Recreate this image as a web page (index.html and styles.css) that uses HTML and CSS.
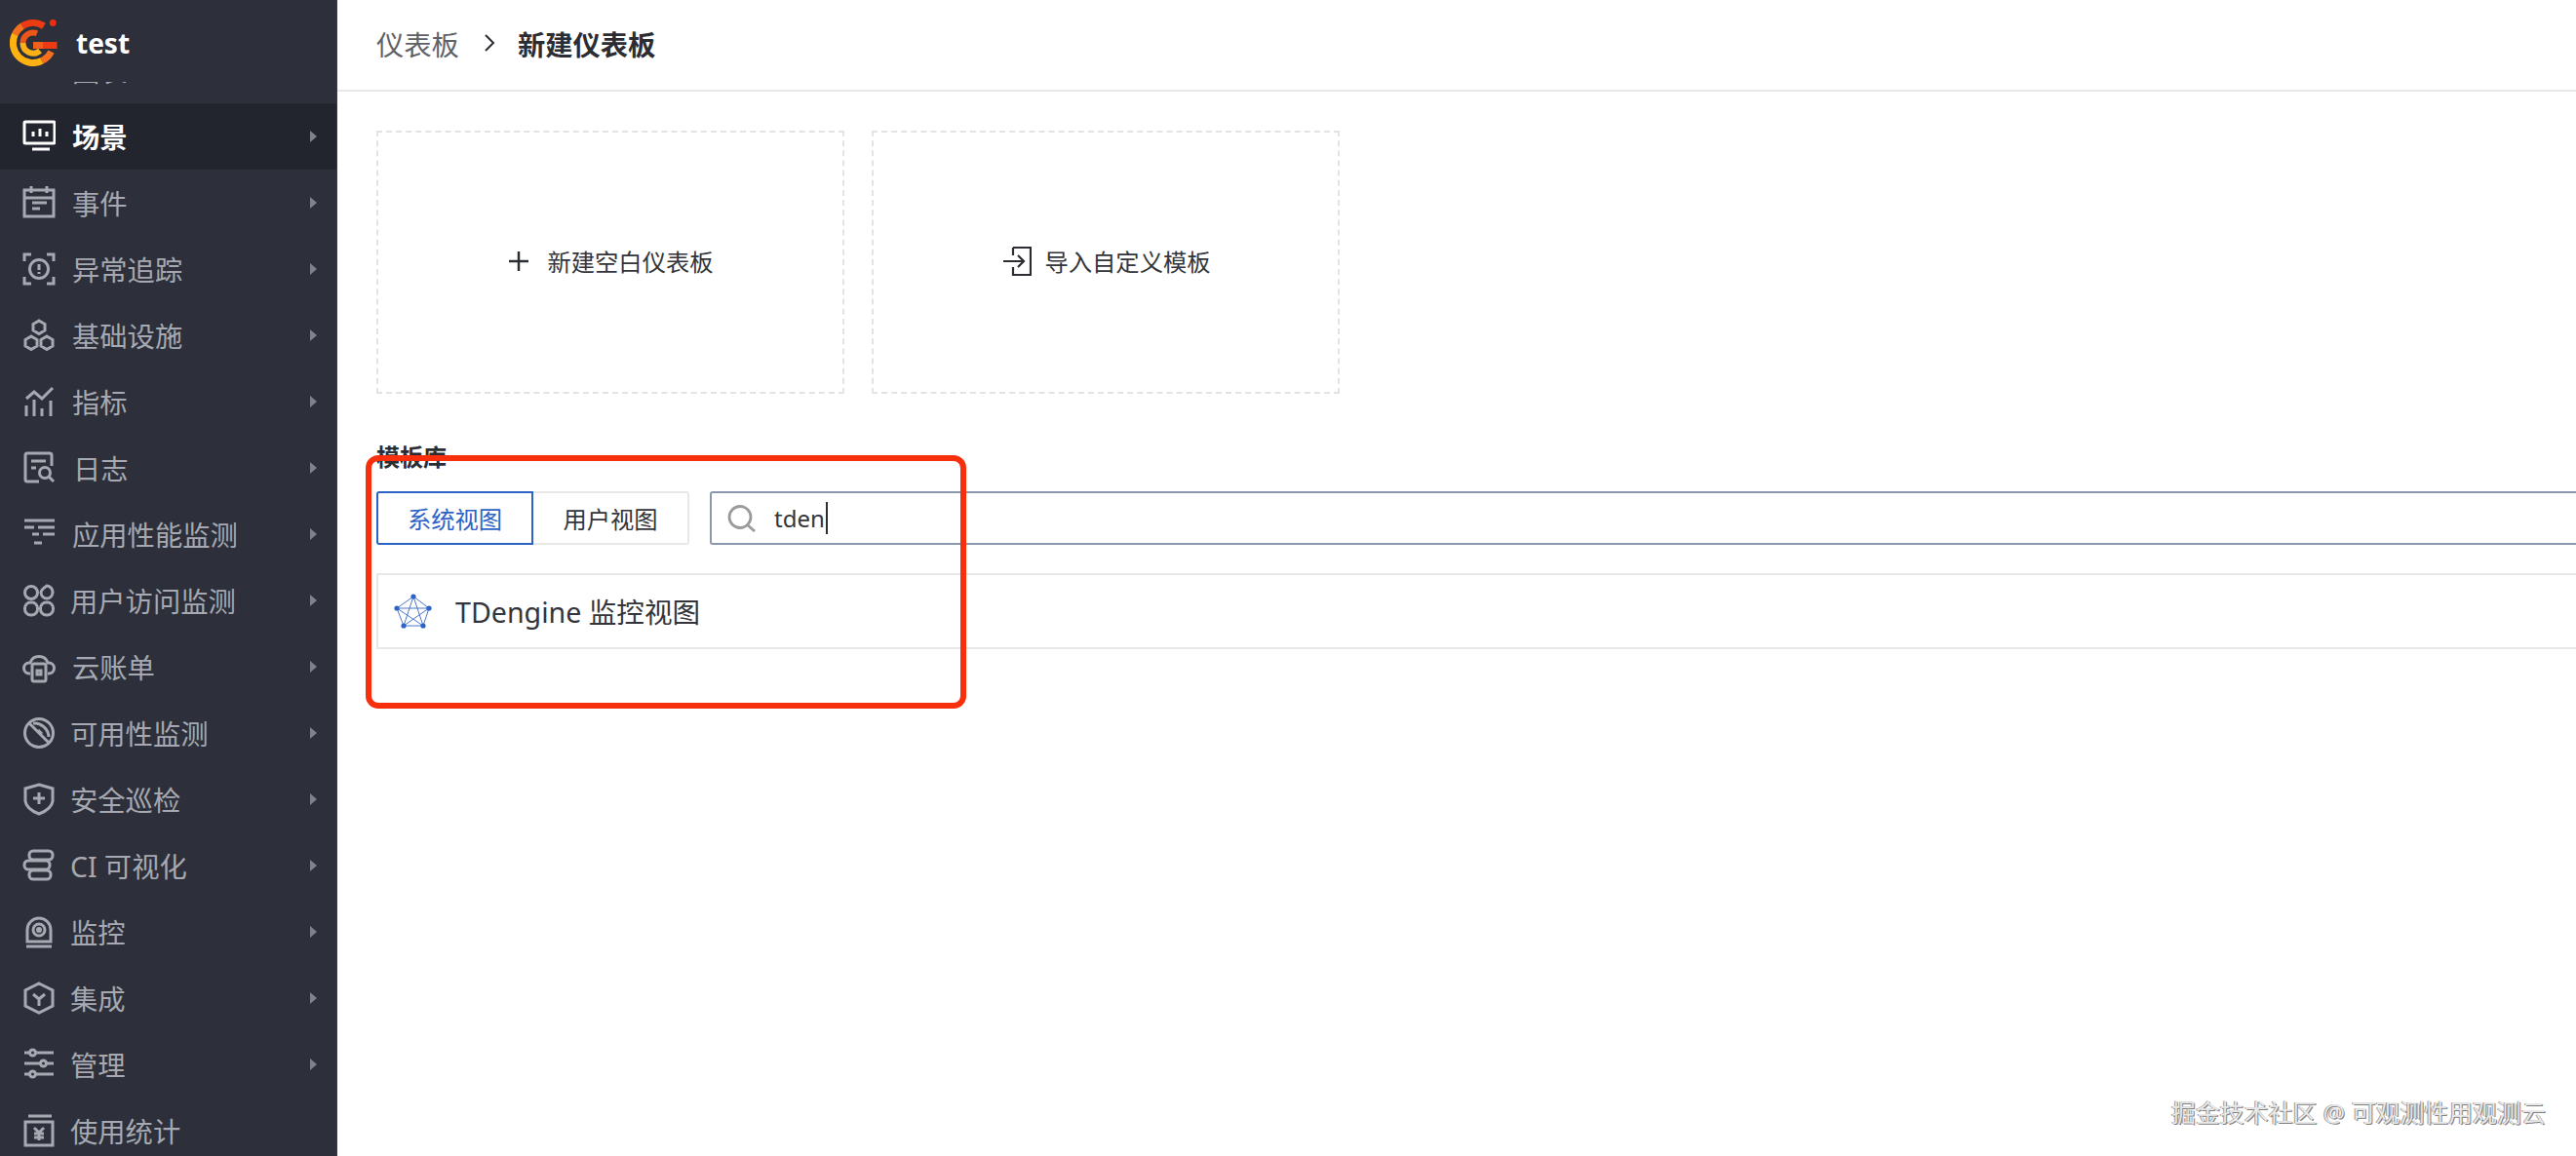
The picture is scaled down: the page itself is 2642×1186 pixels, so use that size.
FILE: index.html
```html
<!DOCTYPE html>
<html lang="zh-CN">
<head>
<meta charset="utf-8">
<title>新建仪表板</title>
<link rel="stylesheet" href="styles.css">
</head>
<body>
<div class="app">
  <aside class="sidebar">
    <div class="brand">
      <svg class="logo" viewBox="0 0 49 48">
        <g class="logo-arcs">
          <path stroke="#ee3a12" d="M35 6.700A20.500 20.500 0 0 0 13 6.700"/>
          <path stroke="#f4701c" d="M13 6.700A20.500 20.500 0 0 0 5.400 15.200"/>
          <path stroke="#fdb212" d="M5.400 15.200A20.500 20.500 0 0 0 33 42.400"/>
          <path stroke="#f4701c" d="M33 42.400A20.500 20.500 0 0 0 42.500 33"/>
          <path class="inner" stroke="#ec561a" d="M28 14.300A10.500 10.500 0 0 0 13.500 24"/>
          <path class="inner" stroke="#fbb016" d="M13.500 24A10.500 10.500 0 0 0 31 32"/>
          <path stroke="#f0601a" d="M24 26.500H34"/>
          <path stroke="#ee3a12" d="M34 26.500H48.500"/>
        </g>
        <circle cx="44.300" cy="3.500" r="3.400" fill="#ee2c12"/>
      </svg>
      <span class="brand-name">test</span>
    </div>
    <nav class="nav">
      <ul class="nav-list">
        <li class="nav-item"><svg class="ico" viewBox="0 0 34 34"><rect x="2" y="2" width="30" height="24" rx="2"/></svg><span class="lbl">图表</span></li>
        <li class="nav-item active"><svg class="ico" viewBox="0 0 34 34"><rect x="2" y="2" width="31" height="22" rx="1"/><path d="M10 30H28M11 12V17M18 9V17M25 12V17"/></svg><span class="lbl">场景</span><i class="arrow"></i></li>
        <li class="nav-item"><svg class="ico" viewBox="0 0 34 34"><path d="M2 4H32V31H2ZM2 12H32M9 0V7M25 0V7M10 17H25M10 23H18"/></svg><span class="lbl">事件</span><i class="arrow"></i></li>
        <li class="nav-item"><svg class="ico" viewBox="0 0 34 34"><path d="M2 9V2H9M25 2H32V9M2 25V32H9M25 32H32V25"/><circle cx="17" cy="17" r="9.500"/><path d="M17 12V18M17 20V22"/></svg><span class="lbl">异常追踪</span><i class="arrow"></i></li>
        <li class="nav-item"><svg class="ico" viewBox="0 0 34 34"><path d="M17 2L23 5.500V12L17 15.500L11 12V5.500ZM9 18L15 21.500V28L9 31.500L3 28V21.500ZM25 18L31 21.500V28L25 31.500L19 28V21.500Z"/></svg><span class="lbl">基础设施</span><i class="arrow"></i></li>
        <li class="nav-item"><svg class="ico" viewBox="0 0 34 34"><path d="M4 32V21M12 32V15M20 32V24M29 32V16M4 14L12 7L20 14L31 3"/></svg><span class="lbl">指标</span><i class="arrow"></i></li>
        <li class="nav-item"><svg class="ico" viewBox="0 0 34 34"><path d="M30 15V4Q30 2 28 2H5Q3 2 3 4V29Q3 31 5 31H17M9 10H24M9 17H14"/><circle cx="23" cy="22" r="5.500"/><path d="M27 26L32 31"/></svg><span class="lbl log">日志</span><i class="arrow"></i></li>
        <li class="nav-item"><svg class="ico" viewBox="0 0 34 34"><path d="M2 3H33M2 10H12M16 10H33M10 17H17M21 17H33M12 26H20"/></svg><span class="lbl">应用性能监测</span><i class="arrow"></i></li>
        <li class="nav-item"><svg class="ico tight" viewBox="0 0 34 34"><circle cx="9" cy="9" r="6.500"/><path d="M25 2A6.500 6.500 0 0 1 31 9A6.500 6.500 0 0 1 25 15A6.500 6.500 0 0 1 19 9Q19 6 25 2Z"/><rect x="2.500" y="19" width="13" height="13" rx="6"/><rect x="18.500" y="19" width="13" height="13" rx="6"/></svg><span class="lbl">用户访问监测</span><i class="arrow"></i></li>
        <li class="nav-item"><svg class="ico" viewBox="0 0 34 34"><path d="M8 24H7A5.500 5.500 0 0 1 7 13H8A9.500 9.500 0 0 1 26 13H27A5.500 5.500 0 0 1 27 24H26"/><rect x="10" y="14" width="14" height="18" rx="2"/><path d="M15 21H19V25H15Z"/></svg><span class="lbl">云账单</span><i class="arrow"></i></li>
        <li class="nav-item"><svg class="ico tight" viewBox="0 0 34 34"><circle cx="17" cy="17" r="14.500"/><path d="M7 7L27 27M11 7A15 15 0 0 1 27 21M16 14L20 18"/></svg><span class="lbl">可用性监测</span><i class="arrow"></i></li>
        <li class="nav-item"><svg class="ico tight" viewBox="0 0 34 34"><path d="M17 2L31 6V19Q30 27 17 32Q4 27 3 19V6ZM11 16H23M17 10V22"/></svg><span class="lbl">安全巡检</span><i class="arrow"></i></li>
        <li class="nav-item"><svg class="ico tight" viewBox="0 0 34 34"><rect x="7" y="2" width="24" height="9" rx="4"/><rect x="2" y="12" width="26" height="9" rx="4"/><rect x="7" y="22" width="22" height="9" rx="4"/></svg><span class="lbl">CI 可视化</span><i class="arrow"></i></li>
        <li class="nav-item"><svg class="ico tight" viewBox="0 0 34 34"><path d="M5 27V15A12 12 0 0 1 29 15V27ZM4 32H30"/><circle cx="17" cy="15" r="6"/><circle cx="17" cy="15" r="1.500"/></svg><span class="lbl">监控</span><i class="arrow"></i></li>
        <li class="nav-item"><svg class="ico tight" viewBox="0 0 34 34"><path d="M17 2L31 9V25L17 32L3 25V9ZM11 13L17 18L23 13M17 18V25"/></svg><span class="lbl">集成</span><i class="arrow"></i></li>
        <li class="nav-item"><svg class="ico tight" viewBox="0 0 34 34"><path d="M2 5H7M14 5H32M2 16H18M25 16H32M2 27H7M14 27H32"/><circle cx="10.500" cy="5" r="3"/><circle cx="21.500" cy="16" r="3"/><circle cx="10.500" cy="27" r="3"/></svg><span class="lbl">管理</span><i class="arrow"></i></li>
        <li class="nav-item"><svg class="ico tight" viewBox="0 0 34 34"><path d="M3 8H31V32H3ZM6 2H30M12 14L17 19L22 14M17 19V27M12 20H22M12 24H22"/></svg><span class="lbl">使用统计</span></li>
      </ul>
    </nav>
  </aside>
  <main class="main">
    <header class="crumbs">
      <span class="crumb">仪表板</span>
      <svg class="crumb-sep" viewBox="0 0 12 18"><path d="M2 1L10 9L2 17"/></svg>
      <strong class="crumb-now">新建仪表板</strong>
    </header>
    <section class="content">
      <div class="cards">
        <div class="card">
          <svg class="plus" viewBox="0 0 20 20"><path d="M10 0V20M0 10H20"/></svg>
          <span>新建空白仪表板</span>
        </div>
        <div class="card">
          <svg class="import" viewBox="0 0 30 30"><path d="M11 1H29V29H11V21M11 9V1M1 15H22M16 9L22 15L16 21"/></svg>
          <span>导入自定义模板</span>
        </div>
      </div>
      <h2 class="lib-title">模板库</h2>
      <div class="tools">
        <div class="seg">
          <button class="seg-btn on">系统视图</button>
          <button class="seg-btn">用户视图</button>
        </div>
        <div class="search">
          <svg class="search-ico" viewBox="0 0 30 28"><circle cx="13" cy="12.500" r="11"/><path d="M21 21L28 27"/></svg>
          <span class="search-text">tden</span><i class="caret"></i>
        </div>
      </div>
      <div class="row">
        <svg class="td-ico" viewBox="0 0 40 36">
          <g class="td-lines"><path d="M20 3L36 15L30 33H10L3 15ZM20 3L30 33L3 15H36L10 33Z"/></g>
          <g class="td-dots"><circle cx="20" cy="3" r="2.600"/><circle cx="36" cy="15" r="2.600"/><circle cx="30" cy="33" r="2.600"/><circle cx="10" cy="33" r="2.600"/><circle cx="3" cy="15" r="2.600"/></g>
        </svg>
        <span class="row-text">TDengine 监控视图</span>
      </div>
    </section>
  </main>
</div>
<div class="highlight"></div>
<div class="watermark">掘金技术社区 @ 可观测性用观测云</div>
</body>
</html>
```
FILE: styles.css
```css
* { box-sizing: border-box; }
html, body { margin: 0; height: 100%; overflow: hidden; background: #fff; }
body { font-family: "Noto Sans", "Noto Sans CJK SC", sans-serif; color: #2b2d33; }
.app { display: flex; height: 1186px; }

.sidebar { width: 346px; flex: none; background: #2d303b; border-right: 1px solid #3a3d47; display: flex; flex-direction: column; height: 100%; }
.brand { height: 84px; flex: none; display: flex; align-items: center; padding: 4px 0 0 10px; position: relative; z-index: 1; background: #2d303b; }
.logo { width: 49px; height: 48px; flex: none; }
.logo-arcs { fill: none; stroke-width: 7; }
.logo-arcs .inner { stroke-width: 6; }
.brand-name { margin-left: 19px; font-size: 28px; font-weight: 700; color: #fff; line-height: 1; }
.nav { flex: 1; overflow: hidden; }
.nav-list { list-style: none; margin: -46px 0 0; padding: 0; }
.nav-item { height: 68px; display: flex; align-items: center; padding-left: 23px; color: #a6a9b1; position: relative; }
.nav-item.active { background: #23252e; color: #fff; font-weight: 700; }
.ico { width: 34px; height: 34px; flex: none; fill: none; stroke: currentColor; stroke-width: 3; }
.lbl { margin-left: 17px; padding-top: 2px; font-size: 28.300px; line-height: 1; white-space: nowrap; }
.ico.tight + .lbl { margin-left: 15px; }
.lbl.log { margin-left: 18px; }
.arrow { position: absolute; right: 20px; top: 50%; margin-top: -6px; border-left: 7px solid #7f828c; border-top: 6px solid transparent; border-bottom: 6px solid transparent; }

.main { flex: 1; min-width: 0; display: flex; flex-direction: column; overflow: hidden; }
.crumbs { height: 94px; flex: none; border-bottom: 2px solid #e8e8e8; display: flex; align-items: center; padding: 0 0 4px 40px; font-size: 28.300px; }
.crumb { color: #5f6168; }
.crumb-sep { width: 12px; height: 18px; margin: 0 23px 0 25px; fill: none; stroke: #2b2d33; stroke-width: 2; }
.crumb-now { font-weight: 700; color: #2b2d33; }
.content { padding: 40px 0 0 40px; width: calc(100% + 20px); }
.cards { display: flex; gap: 28px; }
.card { width: 480px; height: 270px; padding: 0 0 3px 2px; border: 2px dashed #e3e3e3; display: flex; align-items: center; justify-content: center; gap: 16px; font-size: 24.300px; color: #33353b; }
.plus { width: 20px; height: 20px; fill: none; stroke: #2b2d33; stroke-width: 2.500; margin-right: 3px; }
.import { width: 30px; height: 30px; fill: none; stroke: #2b2d33; stroke-width: 2.200; margin-right: -3px; }
.lib-title { margin: 50px 0 0; font-size: 24px; line-height: 30px; font-weight: 700; color: #2b2d33; }
.tools { display: flex; margin-top: 20px; gap: 21px; }
.seg { display: flex; flex: none; }
.seg-btn { font: inherit; font-size: 24.300px; width: 160px; height: 55px; padding: 0; background: #fff; border: 2px solid #e8e8e8; border-left: 0; border-radius: 0 3px 3px 0; color: #33353b; }
.seg-btn.on { width: 161px; border: 2px solid #2d62c6; border-radius: 3px 0 0 3px; color: #2d62c6; }
.search { flex: 1; height: 55px; border: 2px solid #8b97ad; border-radius: 3px; display: flex; align-items: center; padding-left: 16px; }
.search-ico { width: 30px; height: 28px; fill: none; stroke: #9a9a9a; stroke-width: 2.800; }
.search-text { margin-left: 18px; font-size: 24px; color: #33353b; }
.caret { width: 2px; height: 33px; background: #2b2d33; margin-left: 1px; }
.row { margin-top: 29px; height: 78px; padding-bottom: 2px; border: 2px solid #e8e8e8; display: flex; align-items: center; padding-left: 16px; }
.td-ico { width: 40px; height: 36px; flex: none; margin-top: 2px; }
.td-lines { fill: none; stroke: #4d78cf; stroke-width: 1; }
.td-dots { fill: #2d62c6; }
.row-text { margin-left: 23px; font-size: 28.600px; color: #33353b; white-space: nowrap; }

.highlight { position: absolute; left: 375px; top: 467px; width: 616px; height: 260px; border: 6px solid #f72f0c; border-radius: 13px; pointer-events: none; }
.watermark { position: absolute; left: 2227px; top: 1125px; font-size: 24.900px; line-height: 32px; white-space: nowrap; color: #e8e8e8; text-shadow: -1px 0 0 #999, 1px 1px 0 #808080; }
```
